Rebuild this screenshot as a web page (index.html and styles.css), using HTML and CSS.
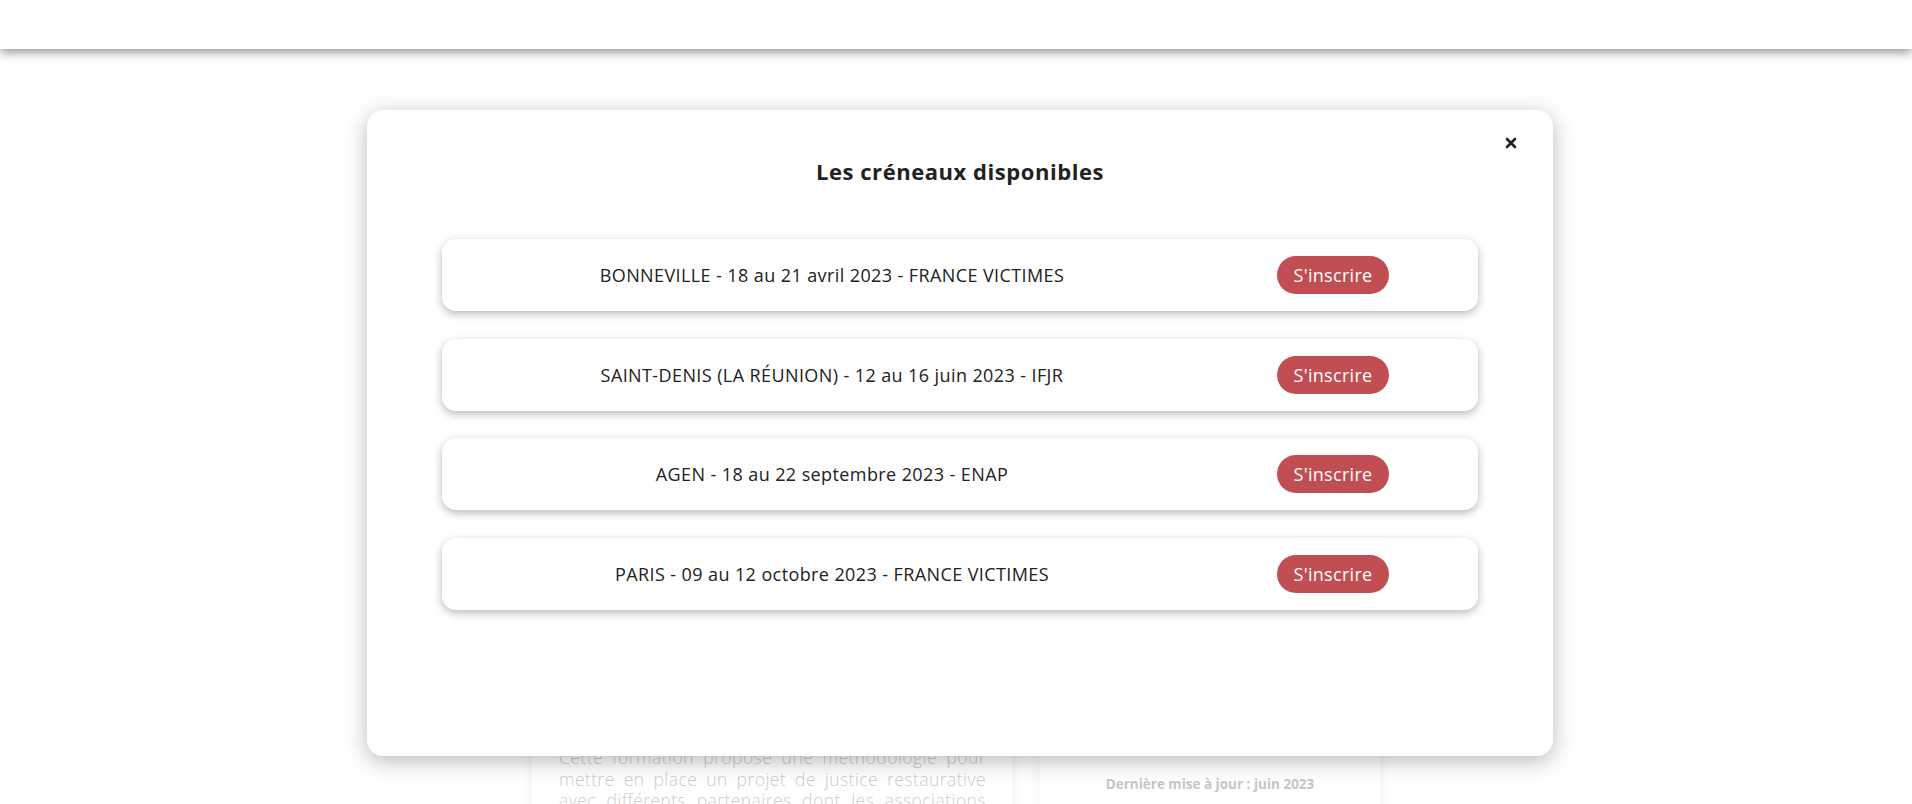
FILE: index.html
```html
<!DOCTYPE html>
<html lang="fr">
<head>
<meta charset="utf-8">
<title>Les créneaux disponibles</title>
<link rel="stylesheet" href="styles.css">
</head>
<body>
<header class="topbar"></header>

<main class="page">
  <div class="bg-row">
    <div class="bg-card bg-card-left">
      <p class="bg-text">Cette formation propose une méthodologie pour mettre en place un projet de justice restaurative avec différents partenaires dont les associations d'aide aux victimes et les services pénitentiaires.</p>
    </div>
    <div class="bg-card bg-card-right">
      <p class="bg-update">Dernière mise à jour : juin 2023</p>
    </div>
  </div>
</main>

<div class="modal" role="dialog" aria-label="Les créneaux disponibles">
  <button class="modal-close" aria-label="Fermer">
    <svg viewBox="0 0 12 12" width="12" height="12" aria-hidden="true">
      <path d="M2 2 L10 10 M10 2 L2 10" stroke="#1f1f1f" stroke-width="2.6" stroke-linecap="round"/>
    </svg>
  </button>
  <h2 class="modal-title">Les créneaux disponibles</h2>
  <div class="slots">
    <div class="slot">
      <span class="slot-label">BONNEVILLE - 18 au 21 avril 2023 - FRANCE VICTIMES</span>
      <span class="slot-action"><a class="btn" href="#">S'inscrire</a></span>
    </div>
    <div class="slot">
      <span class="slot-label">SAINT-DENIS (LA RÉUNION) - 12 au 16 juin 2023 - IFJR</span>
      <span class="slot-action"><a class="btn" href="#">S'inscrire</a></span>
    </div>
    <div class="slot">
      <span class="slot-label">AGEN - 18 au 22 septembre 2023 - ENAP</span>
      <span class="slot-action"><a class="btn" href="#">S'inscrire</a></span>
    </div>
    <div class="slot">
      <span class="slot-label">PARIS - 09 au 12 octobre 2023 - FRANCE VICTIMES</span>
      <span class="slot-action"><a class="btn" href="#">S'inscrire</a></span>
    </div>
  </div>
</div>
</body>
</html>
```

FILE: styles.css
```css
* { box-sizing: border-box; }

html, body {
  margin: 0;
  padding: 0;
  background: #ffffff;
  height: 100%;
  overflow: hidden;
}

body {
  font-family: "Open Sans", "Noto Sans", "Liberation Sans", sans-serif;
  color: #222;
  position: relative;
}

.topbar {
  height: 49px;
  background: #fff;
  box-shadow: 0 3px 10px rgba(0, 0, 0, 0.45);
  position: relative;
  z-index: 2;
}

.page {
  padding-top: 698px;
}

.bg-row {
  display: flex;
  gap: 28px;
  padding-left: 532px;
}

.bg-card {
  background: #fff;
  box-shadow: 0 0 12px rgba(0, 0, 0, 0.06);
  height: 200px;
}

.bg-card-left {
  width: 480px;
  padding: 0 26px 0 27px;
}

.bg-card-right {
  width: 340px;
}

.bg-text {
  margin: 0;
  font-weight: 300;
  font-size: 17.5px;
  line-height: 21.5px;
  text-align: justify;
  color: #cdcdcd;
  letter-spacing: 0.45px;
}

.bg-update {
  margin: 28px 0 0;
  text-align: center;
  font-weight: 700;
  font-size: 13.5px;
  line-height: 19px;
  color: #c6c6c6;
}

.modal {
  position: absolute;
  top: 110px;
  left: 367px;
  width: 1186px;
  height: 646px;
  background: #fff;
  border-radius: 16px;
  box-shadow: 0 5px 22px rgba(0, 0, 0, 0.28);
  padding-top: 47px;
  z-index: 5;
}

.modal-close {
  position: absolute;
  top: 27px;
  right: 36px;
  width: 12px;
  height: 12px;
  padding: 0;
  border: 0;
  background: none;
  cursor: pointer;
  display: block;
}

.modal-close svg { display: block; }

.modal-title {
  margin: 0;
  text-align: center;
  font-size: 22px;
  line-height: 28px;
  font-weight: 700;
  color: #222;
  letter-spacing: 0.55px;
}

.slots {
  margin: 54px auto 0;
  width: 1036px;
  display: flex;
  flex-direction: column;
  gap: 27.6px;
}

.slot {
  height: 72px;
  background: #fff;
  border-radius: 14px;
  box-shadow: 0 3px 8px rgba(0, 0, 0, 0.28);
  display: grid;
  grid-template-columns: 780px 1fr;
  align-items: center;
  padding-right: 34px;
}

.slot-label {
  text-align: center;
  font-size: 18px;
  color: #222;
  letter-spacing: 0.4px;
}

.slot-action {
  display: flex;
  justify-content: center;
}

.btn {
  display: inline-flex;
  align-items: center;
  justify-content: center;
  width: 112px;
  height: 38px;
  border-radius: 19px;
  background: #c04e53;
  color: #fff;
  font-size: 18px;
  text-decoration: none;
  letter-spacing: 0.3px;
}
```
